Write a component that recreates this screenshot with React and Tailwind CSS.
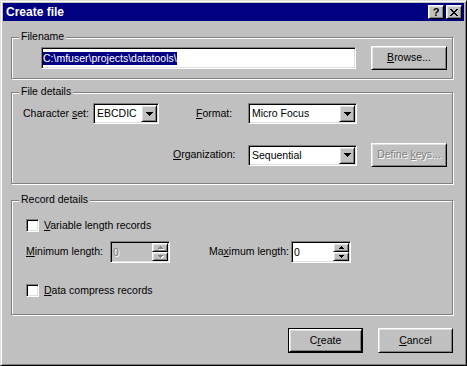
import React from 'react';

const raised =
  'bg-[#c0c0c0] border border-t-white border-l-white border-r-black border-b-black shadow-[inset_1px_1px_0_#dfdfdf,inset_-1px_-1px_0_#808080]';
const sunken =
  'border border-t-[#808080] border-l-[#808080] border-r-white border-b-white shadow-[inset_1px_1px_0_#000,inset_-1px_-1px_0_#dfdfdf]';
const disabledText = 'text-[#808080] [text-shadow:1px_1px_0_#fff]';

const U = ({ children }) => <span className="underline underline-offset-[1px]">{children}</span>;

const Group = ({ label, className = '', children }) => (
  <div className={`relative border border-[#808080] shadow-[inset_1px_1px_0_#fff,1px_1px_0_#fff] ${className}`}>
    <span className="absolute left-[7px] top-[-8px] bg-[#c0c0c0] px-[2px] leading-[13px]">{label}</span>
    {children}
  </div>
);

const Arrow = ({ color = '#000' }) => (
  <svg width="7" height="4" viewBox="0 0 7 4" shapeRendering="crispEdges">
    <path d="M0 0h7v1H0zM1 1h5v1H1zM2 2h3v1H2zM3 3h1v1H3z" fill={color} />
  </svg>
);

const Combo = ({ value, width }) => (
  <div className={`${sunken} bg-white h-[21px] p-[1px] flex items-stretch ${width}`}>
    <span className="flex-1 pl-[2px] leading-[17px] whitespace-nowrap overflow-hidden">{value}</span>
    <div className={`${raised} w-[16px] flex items-center justify-center`}>
      <Arrow />
    </div>
  </div>
);

const SpinArrow = ({ up, disabled }) => (
  <svg width="5" height="3" viewBox="0 0 5 3" shapeRendering="crispEdges" className={disabled ? 'drop-shadow-[1px_1px_0_#fff]' : ''}>
    <path
      d={up ? 'M2 0h1v1H2zM1 1h3v1H1zM0 2h5v1H0z' : 'M0 0h5v1H0zM1 1h3v1H1zM2 2h1v1H2z'}
      fill={disabled ? '#808080' : '#000'}
    />
  </svg>
);

const Spin = ({ value, disabled }) => (
  <div className={`${sunken} ${disabled ? 'bg-[#c0c0c0]' : 'bg-white'} w-[60px] h-[22px] p-[1px] flex items-stretch`}>
    <span className={`flex-1 pl-[1px] leading-[18px] ${disabled ? disabledText : ''}`}>{value}</span>
    <div className="w-[16px] flex flex-col">
      <div className={`${raised} h-[9px] flex items-center justify-center`}>
        <SpinArrow up disabled={disabled} />
      </div>
      <div className={`${raised} h-[9px] flex items-center justify-center`}>
        <SpinArrow disabled={disabled} />
      </div>
    </div>
  </div>
);

const Check = ({ children }) => (
  <div className="flex items-center h-[13px]">
    <div className={`${sunken} bg-white w-[13px] h-[13px]`} />
    <span className="ml-[5px] leading-[13px]">{children}</span>
  </div>
);

const Button = ({ children, width = 'w-[76px]', height = 'h-[24px]', disabled, isDefault }) => {
  const inner = (
    <div className={`${raised} w-full h-full flex items-center justify-center ${disabled ? disabledText : ''}`}>
      <span className="whitespace-nowrap">{children}</span>
    </div>
  );
  return isDefault ? (
    <div className={`border border-black ${width} ${height}`}>{inner}</div>
  ) : (
    <div className={`${width} ${height}`}>{inner}</div>
  );
};

export default function App() {
  return (
    <div className="w-[467px] h-[366px] bg-[#c0c0c0] border border-t-[#dfdfdf] border-l-[#dfdfdf] border-r-black border-b-black shadow-[inset_1px_1px_0_#fff,inset_-1px_-1px_0_#808080] p-[2px] font-['Liberation_Sans',Arial,sans-serif] text-[10.5px] text-black select-none">
      {/* Title bar */}
      <div className="h-[18px] bg-[#000080] flex items-center justify-between pl-[3px] pr-[2px]">
        <span className="text-white font-bold text-[12px] leading-[18px]">Create file</span>
        <div className="flex gap-[2px]">
          <div className={`${raised} w-[16px] h-[14px] flex items-center justify-center font-bold text-[11px] leading-none`}>?</div>
          <div className={`${raised} w-[16px] h-[14px] flex items-center justify-center`}>
            <svg width="8" height="7" viewBox="0 0 8 7" shapeRendering="crispEdges">
              <path
                d="M0 0h2v1H0zM6 0h2v1H6zM1 1h2v1H1zM5 1h2v1H5zM2 2h4v1H2zM3 3h2v1H3zM2 4h4v1H2zM1 5h2v1H1zM5 5h2v1H5zM0 6h2v1H0zM6 6h2v1H6z"
                fill="#000"
              />
            </svg>
          </div>
        </div>
      </div>

      <div className="pl-[8px]">
        {/* Filename */}
        <Group label="Filename" className="mt-[16px] w-[442px] h-[42px]">
          <div className="h-full flex items-center pl-[29px]">
            <div className={`${sunken} bg-white w-[315px] h-[22px] p-[1px] pl-[1px] flex items-center`}>
              <span className="bg-[#000080] text-white leading-[13px] whitespace-nowrap">
                {'C:\\mfuser\\projects\\datatools\\'}
              </span>
            </div>
            <div className="ml-[15px]">
              <Button>
                <U>B</U>rowse...
              </Button>
            </div>
          </div>
        </Group>

        {/* File details */}
        <Group label="File details" className="mt-[13px] w-[442px] h-[92px]">
          <div className="pt-[10px] flex items-center h-[31px] pl-[11px]">
            <span className="w-[70px] whitespace-nowrap">
              Character <U>s</U>et:
            </span>
            <Combo value="EBCDIC" width="w-[66px]" />
            <span className="ml-[37px] w-[52px]">
              <U>F</U>ormat:
            </span>
            <Combo value="Micro Focus" width="w-[109px]" />
          </div>
          <div className="mt-[19px] flex items-center h-[24px] pl-[161px]">
            <span className="w-[75px]">
              <U>O</U>rganization:
            </span>
            <Combo value="Sequential" width="w-[109px]" />
            <div className="ml-[14px]">
              <Button disabled>
                Define <U>k</U>eys...
              </Button>
            </div>
          </div>
        </Group>

        {/* Record details */}
        <Group label="Record details" className="mt-[16px] w-[442px] h-[115px]">
          <div className="pl-[14px] pt-[18px]">
            <Check>
              <U>V</U>ariable length records
            </Check>
            <div className="mt-[9px] flex items-center h-[22px]">
              <span className="w-[84px]">
                <U>M</U>inimum length:
              </span>
              <Spin value="0" disabled />
              <span className="ml-[39px] w-[82px] whitespace-nowrap">
                Ma<U>x</U>imum length:
              </span>
              <Spin value="0" />
            </div>
            <div className="mt-[21px]">
              <Check>
                <U>D</U>ata compress records
              </Check>
            </div>
          </div>
        </Group>

        {/* Buttons */}
        <div className="w-[442px] mt-[13px] flex justify-end gap-[15px]">
          <Button width="w-[75px]" height="h-[25px]" isDefault>
            C<U>r</U>eate
          </Button>
          <Button width="w-[75px]" height="h-[25px]">
            <U>C</U>ancel
          </Button>
        </div>
      </div>
    </div>
  );
}
